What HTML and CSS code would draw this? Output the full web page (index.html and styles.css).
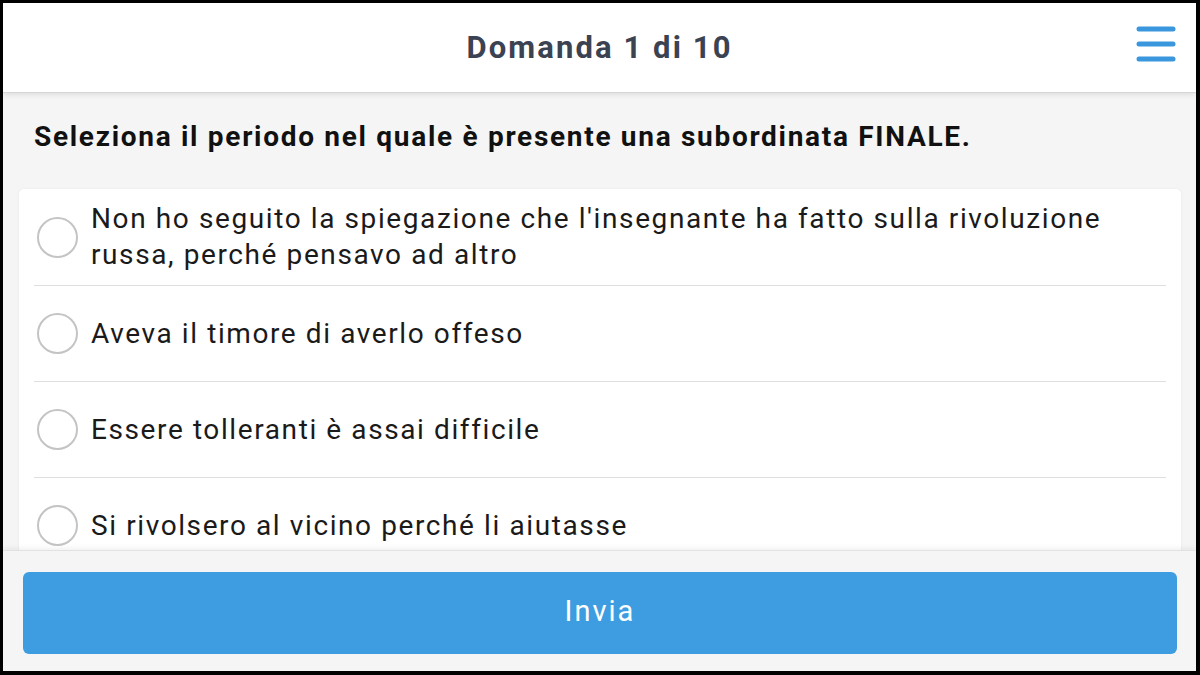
FILE: index.html
```html
<!DOCTYPE html>
<html lang="it">
<head>
<meta charset="utf-8">
<title>Domanda 1 di 10</title>
<link rel="stylesheet" href="styles.css">
</head>
<body>
<div class="frame">
  <div class="app">
    <header class="header">
      <h1 class="title">Domanda 1 di 10</h1>
      <button class="menu" aria-label="Menu">
        <svg width="40" height="38" viewBox="0 0 40 38">
          <line x1="3" y1="4" x2="37" y2="4" stroke="#3a97dd" stroke-width="5" stroke-linecap="round"/>
          <line x1="3" y1="19" x2="37" y2="19" stroke="#3a97dd" stroke-width="5" stroke-linecap="round"/>
          <line x1="3" y1="34" x2="37" y2="34" stroke="#3a97dd" stroke-width="5" stroke-linecap="round"/>
        </svg>
      </button>
    </header>
    <main class="main">
      <p class="question">Seleziona il periodo nel quale è presente una subordinata FINALE.</p>
      <div class="card">
        <label class="option"><span class="radio"></span><span class="text">Non ho seguito la spiegazione che l'insegnante ha fatto sulla rivoluzione russa, perché pensavo ad altro</span></label>
        <label class="option"><span class="radio"></span><span class="text">Aveva il timore di averlo offeso</span></label>
        <label class="option"><span class="radio"></span><span class="text">Essere tolleranti è assai difficile</span></label>
        <label class="option"><span class="radio"></span><span class="text">Si rivolsero al vicino perché li aiutasse</span></label>
      </div>
    </main>
    <footer class="footer">
      <button class="submit">Invia</button>
    </footer>
  </div>
</div>
</body>
</html>
```

FILE: styles.css
```css
* { box-sizing: border-box; }
html, body { margin: 0; padding: 0; height: 100%; }
body {
  background: #000;
  font-family: Roboto, "Noto Sans", "Liberation Sans", sans-serif;
}
.frame {
  height: 675px;
  width: 1200px;
  border-style: solid;
  border-color: #000;
  border-width: 3px 4px 4px 3px;
}
.app {
  height: 100%;
  display: flex;
  flex-direction: column;
  background: #f5f5f5;
  overflow: hidden;
}
.header {
  flex: 0 0 89px;
  background: #fff;
  display: flex;
  align-items: center;
  justify-content: center;
  position: relative;
  z-index: 2;
  box-shadow: 0 1px 0 #d6d6d6, 0 2px 6px rgba(0,0,0,0.12);
}
.title {
  margin: 0;
  font-size: 31px;
  font-weight: 700;
  color: #3b4252;
  letter-spacing: 2.1px;
}
.menu {
  position: absolute;
  right: 20px;
  top: 22px;
  background: none;
  border: 0;
  padding: 0;
  width: 40px;
  height: 38px;
}
.menu svg { display: block; }
.main {
  flex: 1 1 auto;
  overflow: hidden;
  padding: 29px 15px 0 16px;
}
.question {
  margin: 0 0 36px 15px;
  font-size: 28px;
  line-height: 32px;
  font-weight: 700;
  color: #111;
  letter-spacing: 1.7px;
}
.card {
  background: #fff;
  border-radius: 5px;
  padding: 0 15px;
  box-shadow: 0 0 3px rgba(0,0,0,0.06);
}
.option {
  display: flex;
  align-items: center;
  min-height: 96px;
  padding: 12px 0;
  border-bottom: 1px solid #dedede;
}
.radio {
  flex: 0 0 41px;
  height: 41px;
  margin-left: 3px;
  border: 2px solid #c4c4c4;
  border-radius: 50%;
  background: #fff;
}
.text {
  margin-left: 13px;
  font-size: 28px;
  line-height: 36px;
  color: #1a1a1a;
  letter-spacing: 1.6px;
}
.footer {
  flex: 0 0 120px;
  background: #f5f5f5;
  padding: 21px 19px 17px 20px;
  position: relative;
  z-index: 2;
  box-shadow: 0 -1px 0 #e2e2e2, 0 -2px 6px rgba(0,0,0,0.08);
}
.submit {
  width: 100%;
  height: 82px;
  padding: 0 0 4px;
  border: 0;
  border-radius: 6px;
  background: #3d9de0;
  color: #fff;
  font-family: Roboto, "Noto Sans", "Liberation Sans", sans-serif;
  font-size: 29px;
  font-weight: 400;
  letter-spacing: 2px;
}
```
